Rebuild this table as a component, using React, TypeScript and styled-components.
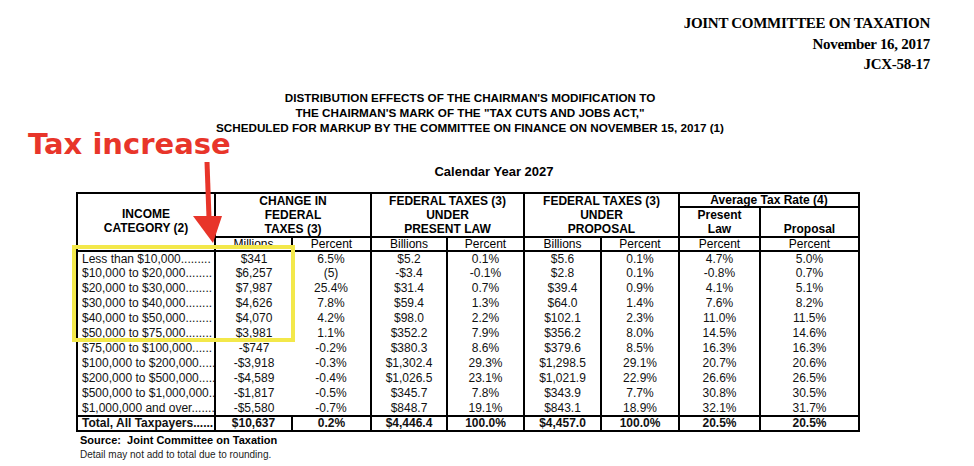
import React from "react";
import styled, { createGlobalStyle } from "styled-components";

const Global = createGlobalStyle`
  html, body { margin: 0; padding: 0; background: #fff; }
  body { font-family: "Liberation Sans", Arial, sans-serif; color: #000; }
`;

const Page = styled.div`
  position: relative;
  width: 974px;
  height: 466px;
  overflow: hidden;
  background: #fff;
`;

const Doc = styled.div`
  width: 940px;
  padding-top: 13px;
  display: flex;
  flex-direction: column;
`;

const Letterhead = styled.div`
  align-self: flex-end;
  padding-right: 10px;
  text-align: right;
  font-family: "Liberation Serif", "Times New Roman", serif;
  font-weight: 700;
  font-size: 15px;
  letter-spacing: -0.3px;
  line-height: 20.5px;
`;

const Title = styled.div`
  margin-top: 15px;
  text-align: center;
  font-weight: 700;
  font-size: 11.7px;
  line-height: 15px;
`;

const Calendar = styled.div`
  margin-top: 29px;
  padding-left: 48px;
  text-align: center;
  font-weight: 700;
  font-size: 13px;
  line-height: 15px;
`;

const TableWrap = styled.div`
  margin-top: 13px;
  padding-left: 76px;
`;

const Table = styled.table`
  border-collapse: collapse;
  table-layout: fixed;
  width: 782px;
  border: 2px solid #000;
  font-size: 12px;
`;

const Th = styled.th<{ $valign?: string; $padTop?: number; $lh?: number }>`
  padding: 0;
  padding-top: ${(p) => p.$padTop ?? 0}px;
  border: 2px solid #000;
  font-weight: 700;
  font-size: 12px;
  line-height: ${(p) => p.$lh ?? 14}px;
  text-align: center;
  vertical-align: ${(p) => p.$valign ?? "middle"};
`;

const Sub = styled.th`
  padding: 0;
  border: 2px solid #000;
  font-weight: 400;
  font-size: 12px;
  line-height: 12px;
  text-align: center;
  vertical-align: middle;
`;

const Td = styled.td<{ $noLeft?: boolean; $label?: boolean; $total?: boolean }>`
  padding: ${(p) => (p.$label ? "0 0 0 4px" : "0")};
  border-left: ${(p) => (p.$noLeft ? "none" : "2px solid #000")};
  border-top: ${(p) => (p.$total ? "2px solid #000" : "none")};
  font-weight: ${(p) => (p.$total ? 700 : 400)};
  line-height: ${(p) => (p.$total ? "13px" : "14.9px")};
  text-align: ${(p) => (p.$label ? "left" : "center")};
  white-space: nowrap;
  overflow: hidden;
  color: #111;
`;

const Footer = styled.div`
  padding-left: 80px;
  padding-top: 1px;
`;

const Source = styled.div`
  font-weight: 700;
  font-size: 11px;
  line-height: 14px;
  white-space: pre;
`;

const Note = styled.div`
  font-size: 10px;
  line-height: 16px;
  color: #222;
`;

const Annotation = styled.div`
  position: absolute;
  left: 28px;
  top: 130px;
  font-family: "DejaVu Sans", sans-serif;
  font-weight: 700;
  font-size: 29px;
  line-height: 1;
  color: #e8352a;
  white-space: nowrap;
`;

const Arrow = styled.svg`
  position: absolute;
  left: 188px;
  top: 158px;
`;

const Highlight = styled.div`
  position: absolute;
  left: 72px;
  top: 245px;
  width: 223px;
  height: 97px;
  box-sizing: border-box;
  border: 4px solid #f3e84a;
`;

type Row = string[];

const rows: Row[] = [
  ["Less than $10,000.........", "$341", "6.5%", "$5.2", "0.1%", "$5.6", "0.1%", "4.7%", "5.0%"],
  ["$10,000 to $20,000........", "$6,257", "(5)", "-$3.4", "-0.1%", "$2.8", "0.1%", "-0.8%", "0.7%"],
  ["$20,000 to $30,000........", "$7,987", "25.4%", "$31.4", "0.7%", "$39.4", "0.9%", "4.1%", "5.1%"],
  ["$30,000 to $40,000........", "$4,626", "7.8%", "$59.4", "1.3%", "$64.0", "1.4%", "7.6%", "8.2%"],
  ["$40,000 to $50,000........", "$4,070", "4.2%", "$98.0", "2.2%", "$102.1", "2.3%", "11.0%", "11.5%"],
  ["$50,000 to $75,000........", "$3,981", "1.1%", "$352.2", "7.9%", "$356.2", "8.0%", "14.5%", "14.6%"],
  ["$75,000 to $100,000......", "-$747", "-0.2%", "$380.3", "8.6%", "$379.6", "8.5%", "16.3%", "16.3%"],
  ["$100,000 to $200,000.....", "-$3,918", "-0.3%", "$1,302.4", "29.3%", "$1,298.5", "29.1%", "20.7%", "20.6%"],
  ["$200,000 to $500,000.....", "-$4,589", "-0.4%", "$1,026.5", "23.1%", "$1,021.9", "22.9%", "26.6%", "26.5%"],
  ["$500,000 to $1,000,000..", "-$1,817", "-0.5%", "$345.7", "7.8%", "$343.9", "7.7%", "30.8%", "30.5%"],
  ["$1,000,000 and over.......", "-$5,580", "-0.7%", "$848.7", "19.1%", "$843.1", "18.9%", "32.1%", "31.7%"],
];

const total: Row = ["Total, All Taxpayers......", "$10,637", "0.2%", "$4,446.4", "100.0%", "$4,457.0", "100.0%", "20.5%", "20.5%"];

const widths = [138, 77, 79, 76, 77, 77, 78, 81, 99];

export default function App() {
  return (
    <Page>
      <Global />
      <Doc>
        <Letterhead>
          <div>JOINT COMMITTEE ON TAXATION</div>
          <div>November 16, 2017</div>
          <div>JCX-58-17</div>
        </Letterhead>
        <Title>
          <div>DISTRIBUTION EFFECTS OF THE CHAIRMAN'S MODIFICATION TO</div>
          <div>THE CHAIRMAN'S MARK OF THE "TAX CUTS AND JOBS ACT,"</div>
          <div>SCHEDULED FOR MARKUP BY THE COMMITTEE ON FINANCE ON NOVEMBER 15, 2017 (1)</div>
        </Title>
        <Calendar>Calendar Year 2027</Calendar>
        <TableWrap>
          <Table>
            <colgroup>
              {widths.map((w, i) => (
                <col key={i} style={{ width: w }} />
              ))}
            </colgroup>
            <thead>
              <tr>
                <Th rowSpan={3} $valign="top" $padTop={13}>
                  INCOME
                  <br />
                  CATEGORY (2)
                </Th>
                <Th colSpan={2} rowSpan={2}>
                  CHANGE IN
                  <br />
                  FEDERAL
                  <br />
                  TAXES (3)
                </Th>
                <Th colSpan={2} rowSpan={2}>
                  FEDERAL TAXES (3)
                  <br />
                  UNDER
                  <br />
                  PRESENT LAW
                </Th>
                <Th colSpan={2} rowSpan={2}>
                  FEDERAL TAXES (3)
                  <br />
                  UNDER
                  <br />
                  PROPOSAL
                </Th>
                <Th colSpan={2} $lh={12}>
                  Average Tax Rate (4)
                </Th>
              </tr>
              <tr>
                <Th>
                  Present
                  <br />
                  Law
                </Th>
                <Th $valign="bottom">Proposal</Th>
              </tr>
              <tr>
                <Sub>Millions</Sub>
                <Sub>Percent</Sub>
                <Sub>Billions</Sub>
                <Sub>Percent</Sub>
                <Sub>Billions</Sub>
                <Sub>Percent</Sub>
                <Sub>Percent</Sub>
                <Sub>Percent</Sub>
              </tr>
            </thead>
            <tbody>
              {rows.map((r, ri) => (
                <tr key={ri}>
                  {r.map((c, ci) => (
                    <Td key={ci} $label={ci === 0} $noLeft={ci === 2}>
                      {c}
                    </Td>
                  ))}
                </tr>
              ))}
              <tr>
                {total.map((c, ci) => (
                  <Td key={ci} $label={ci === 0} $total>
                    {c}
                  </Td>
                ))}
              </tr>
            </tbody>
          </Table>
        </TableWrap>
        <Footer>
          <Source>{"Source:  Joint Committee on Taxation"}</Source>
          <Note>Detail may not add to total due to rounding.</Note>
        </Footer>
      </Doc>

      <Annotation>Tax increase</Annotation>
      <Arrow width="40" height="90" viewBox="0 0 40 90">
        <path d="M16.5 4 L21.5 4 L23.5 60 L18.5 60 Z" fill="#e8352a" />
        <path d="M5 58 L34 58 L25 85 Z" fill="#e8352a" />
      </Arrow>
      <Highlight />
    </Page>
  );
}
